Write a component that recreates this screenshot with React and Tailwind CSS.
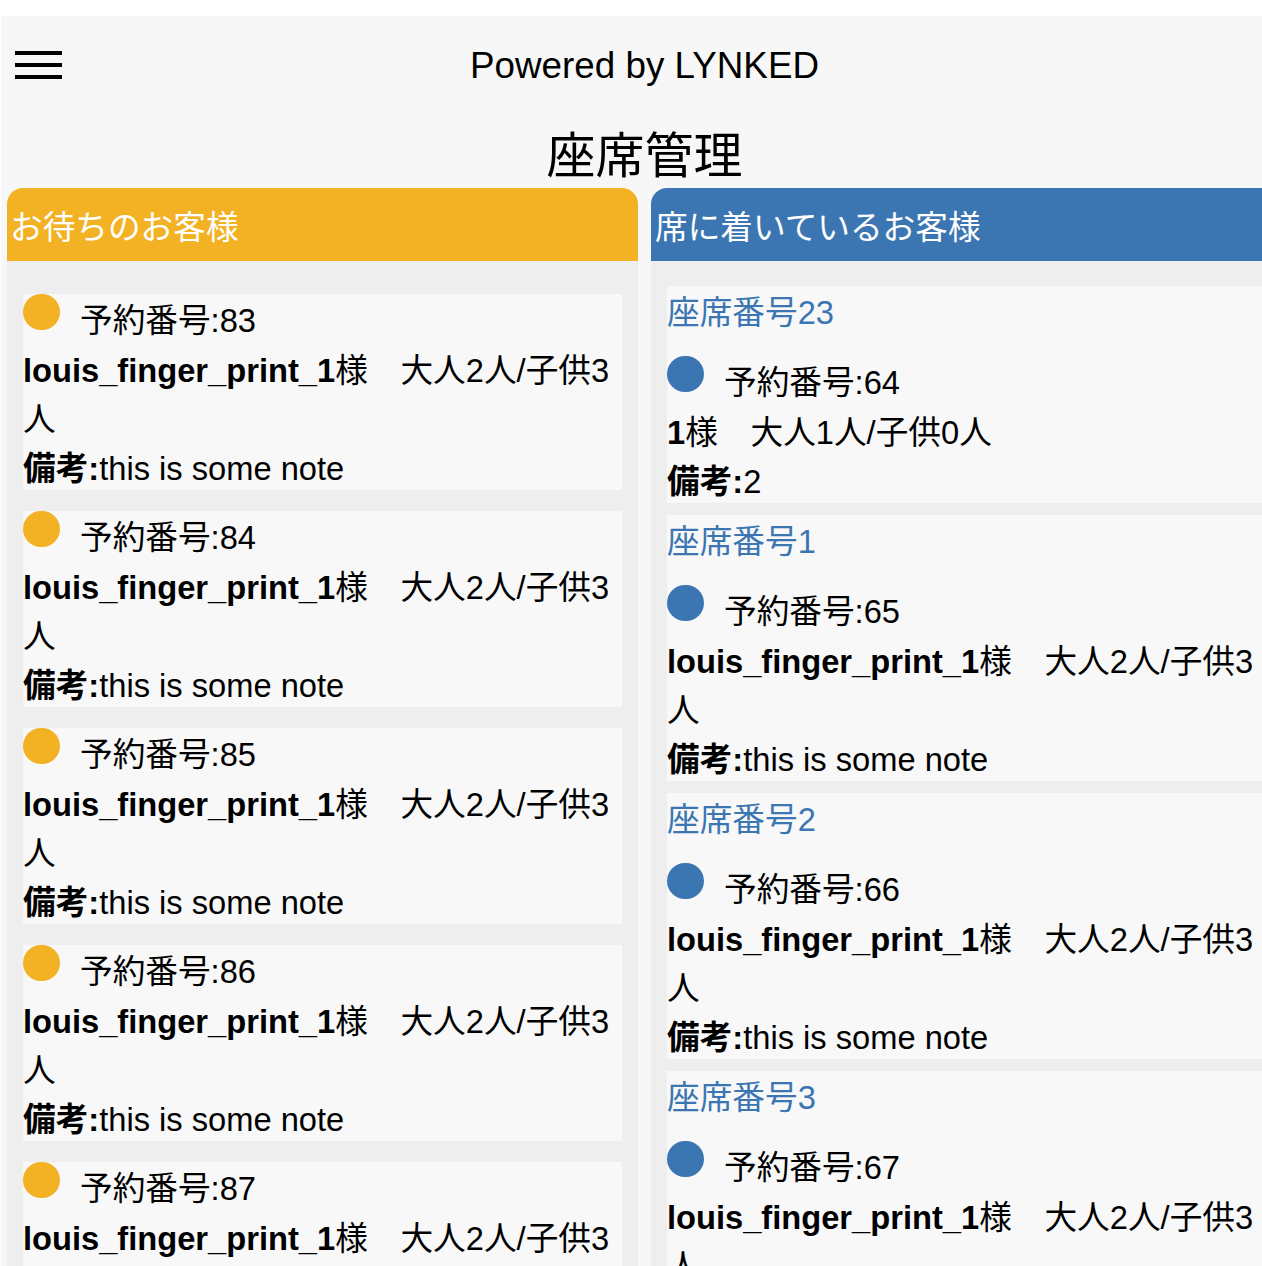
import React from "react";

const FONT = { fontFamily: '"Liberation Sans", "Noto Sans CJK JP", Arial, sans-serif' };

const waiting = [83, 84, 85, 86, 87];
const seated = [
  { seat: "23", no: 64, name: "1", party: "様　大人1人/子供0人", wrap: null, note: "2" },
  { seat: "1", no: 65, name: "louis_finger_print_1", party: "様　大人2人/子供3", wrap: "人", note: "this is some note" },
  { seat: "2", no: 66, name: "louis_finger_print_1", party: "様　大人2人/子供3", wrap: "人", note: "this is some note" },
  { seat: "3", no: 67, name: "louis_finger_print_1", party: "様　大人2人/子供3", wrap: "人", note: "this is some note" },
];

function Body({ color, no, name, party, wrap, note }) {
  return (
    <>
      <div className="flex items-start h-[52px]">
        <span className={`w-[37px] h-[36px] rounded-full shrink-0 ${color}`} />
        <span className="ml-[20px] leading-[54px]">予約番号:{no}</span>
      </div>
      <div className="whitespace-nowrap h-[49px]">
        <span className="font-bold">{name}</span>
        {party}
      </div>
      {wrap && <div className="h-[49px]">{wrap}</div>}
      <div className="h-[46px] whitespace-nowrap">
        <span className="font-bold">備考:</span>
        {note}
      </div>
    </>
  );
}

export default function App() {
  return (
    <div className="w-full h-[1266px] overflow-hidden bg-white pt-[16px] pl-[1px]" style={FONT}>
      <div className="w-[1287px] h-[1250px] bg-[#f7f7f7] text-black">
        {/* top bar */}
        <div className="h-[98px] grid grid-cols-[1fr_auto_1fr] items-center pt-[2px]">
          <div className="pl-[14px] flex flex-col gap-[8px] -mt-[2px]">
            <span className="block w-[47px] h-[4px] bg-black" />
            <span className="block w-[47px] h-[4px] bg-black" />
            <span className="block w-[47px] h-[4px] bg-black" />
          </div>
          <div className="text-[36.8px] leading-none">Powered by LYNKED</div>
          <div />
        </div>
        {/* title */}
        <div className="h-[74px] flex items-center justify-center text-[49px] leading-none pt-[10px]">
          座席管理
        </div>
        {/* panels */}
        <div className="flex gap-[13px] px-[6px]">
          {/* waiting */}
          <div className="w-[631px] shrink-0">
            <div className="h-[73px] rounded-t-2xl bg-[#f2b224] text-white text-[32.67px] flex items-center pl-[3px] pt-[5px]">
              お待ちのお客様
            </div>
            <div className="bg-[#eeeeee] px-4 pt-3 h-[1100px]">
              {waiting.map((n) => (
                <div key={n} className="mt-[21px] bg-[#f8f8f8] text-[32.67px] leading-[49px]">
                  <Body
                    color="bg-[#f2b224]"
                    no={n}
                    name="louis_finger_print_1"
                    party="様　大人2人/子供3"
                    wrap="人"
                    note="this is some note"
                  />
                </div>
              ))}
            </div>
          </div>
          {/* seated */}
          <div className="w-[631px] shrink-0">
            <div className="h-[73px] rounded-t-2xl bg-[#3b76b3] text-white text-[32.67px] flex items-center pl-[4px] pt-[5px]">
              席に着いているお客様
            </div>
            <div className="bg-[#eeeeee] px-4 pt-[13px] h-[1100px]">
              {seated.map((s) => (
                <div key={s.seat} className="mt-[12px] bg-[#f8f8f8] text-[32.67px] leading-[49px]">
                  <div className="text-[#3b76b3] leading-[54px] h-[49px] mb-[21px]">座席番号{s.seat}</div>
                  <Body color="bg-[#3b76b3]" {...s} />
                </div>
              ))}
            </div>
          </div>
        </div>
      </div>
    </div>
  );
}
